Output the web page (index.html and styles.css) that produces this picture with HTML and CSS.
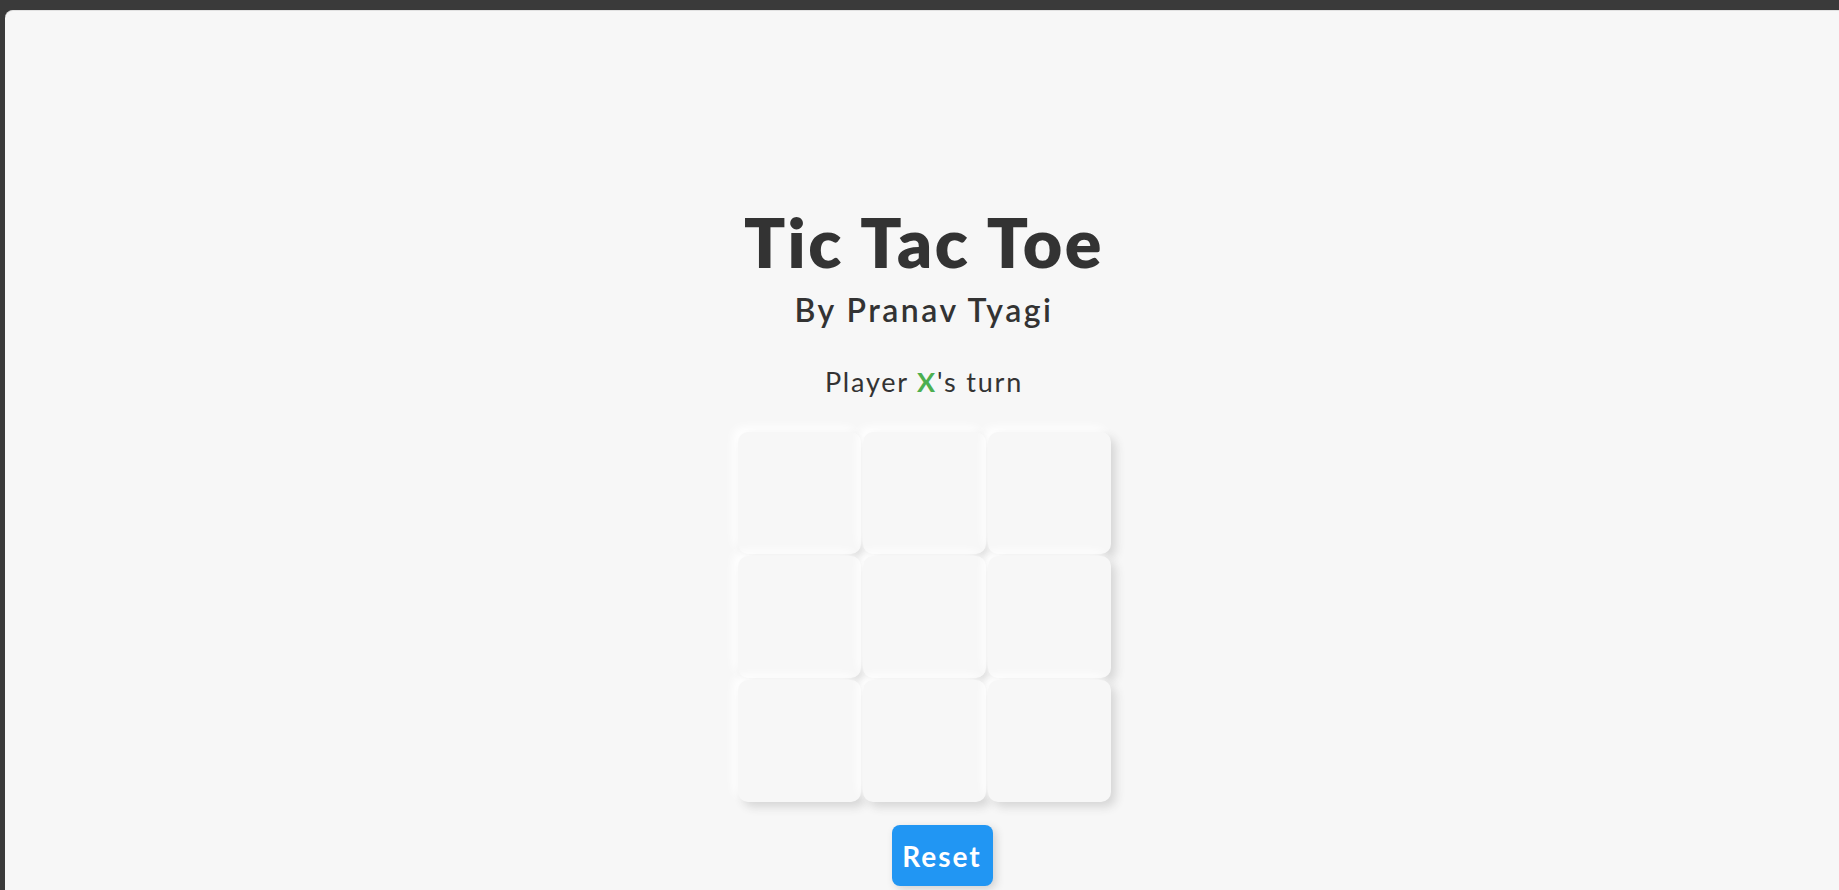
FILE: index.html
```html
<!DOCTYPE html>
<html>
<head>
<meta charset="utf-8">
<link rel="stylesheet" href="styles.css">
</head>
<body>
<div class="frame">
  <main class="game">
    <h1 class="title">Tic Tac Toe</h1>
    <h2 class="subtitle">By Pranav Tyagi</h2>
    <p class="status">Player <span class="mark-x">X</span>'s turn</p>
    <div class="board">
      <div class="cell"></div><div class="cell"></div><div class="cell"></div>
      <div class="cell"></div><div class="cell"></div><div class="cell"></div>
      <div class="cell"></div><div class="cell"></div><div class="cell"></div>
    </div>
    <button class="reset">Reset</button>
  </main>
</div>
</body>
</html>
```
FILE: styles.css
```css
html, body {
  margin: 0;
  padding: 0;
  height: 100%;
  overflow: hidden;
}
body {
  background: #3a3a3a;
  font-family: Lato, "Open Sans", sans-serif;
  color: #333333;
}
.frame {
  margin: 10px 0 0 5px;
  height: 880px;
  background: #f7f7f7;
  border-top-left-radius: 8px;
  border-top: 1px solid #e2e2e2;
  box-sizing: border-box;
}
.game {
  display: flex;
  flex-direction: column;
  align-items: center;
  padding-top: 190px;
  padding-left: 4px;
}
.title {
  margin: 0;
  font-size: 68px;
  line-height: 82px;
  font-weight: 800;
  letter-spacing: 2.6px;
  color: #333333;
}
.subtitle {
  margin: 7px 0 0;
  font-size: 32px;
  line-height: 40px;
  font-weight: 600;
  letter-spacing: 2.5px;
  color: #333333;
}
.status {
  margin: 35px 0 0;
  font-size: 27px;
  line-height: 34px;
  letter-spacing: 1.8px;
  color: #333333;
}
.mark-x {
  color: #4caf50;
  font-weight: 700;
}
.board {
  margin-top: 33px;
  display: grid;
  grid-template-columns: repeat(3, 123px);
  grid-template-rows: repeat(3, 122px);
  gap: 2px;
}
.cell {
  background: #f7f7f7;
  border-radius: 10px;
  box-shadow: 5px 5px 10px #d6d6d6, -5px -5px 10px #ffffff;
}
.reset {
  margin: 23px 0 0 36px;
  width: 101px;
  height: 61px;
  background: #2196f3;
  color: #ffffff;
  border: none;
  border-radius: 8px;
  font-family: Lato, "Open Sans", sans-serif;
  font-size: 28px;
  font-weight: 700;
  letter-spacing: 2px;
  box-shadow: 3px 3px 8px #d0d0d0;
}
```
